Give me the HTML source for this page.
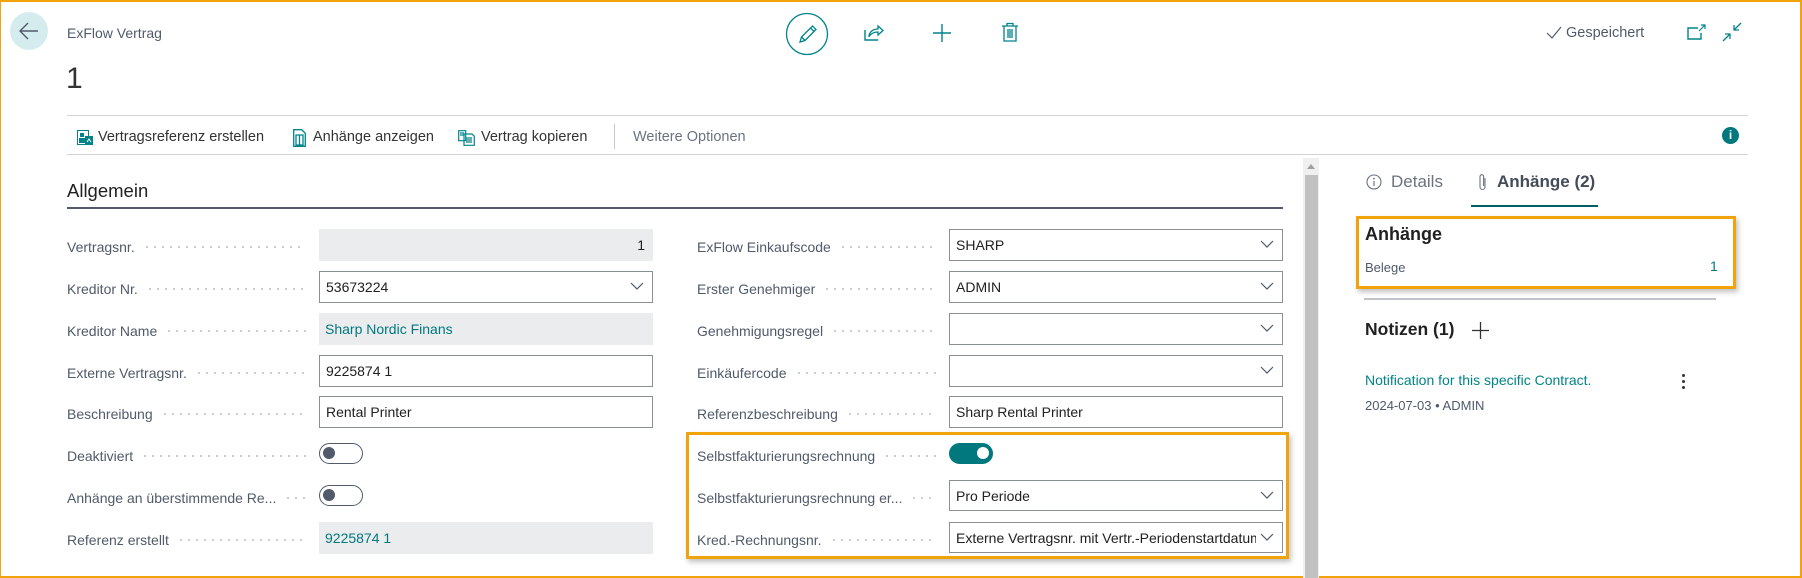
<!DOCTYPE html>
<html><head><meta charset="utf-8">
<style>
*{box-sizing:border-box;margin:0;padding:0}
html,body{width:1802px;height:578px;overflow:hidden;background:#fff}
body{position:relative;font-family:"Liberation Sans",sans-serif;color:#505a6a}
.a{position:absolute}
.frame{left:0;top:0;width:1802px;height:578px;border:2px solid #f0a30a;border-width:2px 2px 2px 1px}
.lbl{position:absolute;height:20px;font-size:14px;color:#505a6a;display:flex;align-items:center;white-space:nowrap}
.lbl .d{flex:1;height:2px;margin-left:8px;background-image:radial-gradient(circle,#b8bcc2 0.8px,transparent 1px);background-size:8px 2px;background-repeat:repeat-x}
.inp{position:absolute;height:32px;border:1px solid #8a8f96;font-size:14px;color:#212121;padding-left:6px;display:flex;align-items:center;white-space:nowrap;overflow:hidden}
.ro{border:none;background:#eaecee}
.chev{position:absolute;right:8px;top:9px}
.tog{position:absolute;width:44px;height:21px;border:1.5px solid #505a6a;border-radius:11px}
.tog:after{content:"";position:absolute;left:3px;top:3px;width:12px;height:12px;border-radius:50%;background:#505a6a}
.tog.on{background:#00787d;border-color:#00787d}
.tog.on:after{left:auto;right:3px;background:#fff}
.tb{position:absolute;top:129px;font-size:14.5px;color:#333;white-space:nowrap}
</style></head><body>
<div class="a frame"></div>

<!-- header -->
<div class="a" style="left:10px;top:12px;width:38px;height:38px;border-radius:50%;background:#d5ecef"></div>
<svg class="a" style="left:18px;top:21px" width="22" height="20" viewBox="0 0 22 20"><path d="M20 10H3M10 2L2 10l8 8" fill="none" stroke="#505a6a" stroke-width="1.4"/></svg>
<div class="a" style="left:67px;top:25px;font-size:14px;color:#505a6a">ExFlow Vertrag</div>
<div class="a" style="left:66px;top:62px;font-size:30px;font-weight:300;color:#333">1</div>

<svg class="a" style="left:785px;top:12px" width="44" height="44" viewBox="0 0 44 44"><circle cx="22" cy="22" r="20.5" fill="none" stroke="#00848a" stroke-width="1.3"/><path d="M15 30l1.5-5 11-11 3.5 3.5-11 11zM16.5 25l3.5 3.5M25.5 16l3.5 3.5" fill="none" stroke="#00848a" stroke-width="1.3"/></svg>
<svg class="a" style="left:864px;top:22px" width="20" height="20" viewBox="0 0 20 20"><path d="M1 8v10h13" fill="none" stroke="#00848a" stroke-width="1.4"/><path d="M5 15c0-5 4-8 9-8V4l5 4.5-5 4.5v-3c-4 0-7 1.5-9 4.5z" fill="none" stroke="#00848a" stroke-width="1.3"/></svg>
<svg class="a" style="left:932px;top:23px" width="20" height="20" viewBox="0 0 20 20"><path d="M10 1v18M1 10h18" stroke="#00848a" stroke-width="1.4"/></svg>
<svg class="a" style="left:1001px;top:22px" width="18" height="20" viewBox="0 0 18 20"><path d="M1 4h16M6 4V1.5h6V4M3 4v15h12V4M7 7v9M9 7v9M11 7v9" fill="none" stroke="#00848a" stroke-width="1.3"/></svg>

<svg class="a" style="left:1546px;top:26px" width="16" height="14" viewBox="0 0 16 14"><path d="M1 7l5 5L15 1" fill="none" stroke="#505a6a" stroke-width="1.2"/></svg>
<div class="a" style="left:1566px;top:25px;font-size:14.5px;color:#505a6a">Gespeichert</div>
<svg class="a" style="left:1687px;top:24px" width="20" height="16" viewBox="0 0 20 16"><path d="M11 4H1v11h13V9" fill="none" stroke="#00848a" stroke-width="1.4"/><path d="M12 7l6-6M14 1h4v4" fill="none" stroke="#00848a" stroke-width="1.2"/></svg>
<svg class="a" style="left:1722px;top:22px" width="20" height="20" viewBox="0 0 20 20"><path d="M19 1l-7 7M12 3v5h5M1 19l7-7M3 12h5v5" fill="none" stroke="#00848a" stroke-width="1.3"/></svg>

<!-- toolbar -->
<div class="a" style="left:67px;top:154px;width:1681px;height:1px;background:#d4d4d4"></div>
<div class="a" style="left:67px;top:115px;width:1681px;height:1px;background:#d4d4d4"></div>
<svg class="a" style="left:77px;top:130px" width="17" height="16" viewBox="0 0 17 16"><rect x="0.5" y="0.5" width="11" height="14" fill="none" stroke="#00848a"/><rect x="3" y="3" width="4" height="4" fill="#00848a"/><rect x="2" y="8" width="6" height="5" fill="#00848a"/><rect x="8" y="6" width="8" height="9" fill="#00848a"/><path d="M10 12l2-3 2 3" stroke="#fff" fill="none"/></svg>
<div class="tb" style="left:98px">Vertragsreferenz erstellen</div>
<svg class="a" style="left:293px;top:129px" width="13" height="18" viewBox="0 0 13 18"><path d="M0.7 0.7h8l3.6 3.6v13H0.7z M3 6h7v10H3z M6.5 6v10" fill="none" stroke="#00848a" stroke-width="1.3"/></svg>
<div class="tb" style="left:313px">Anhänge anzeigen</div>
<svg class="a" style="left:458px;top:130px" width="17" height="16" viewBox="0 0 17 16"><path d="M0.7 0.7h7v10h-7zM6 4h8l2.3 2.3V15.3H6zM8 8h6M8 10h6M8 12h6M2 3h4M2 5h4" fill="none" stroke="#00848a" stroke-width="1.2"/></svg>
<div class="tb" style="left:481px">Vertrag kopieren</div>
<div class="a" style="left:614px;top:124px;width:1px;height:25px;background:#c8c8c8"></div>
<div class="tb" style="left:633px;color:#6b7380">Weitere Optionen</div>
<div class="a" style="left:1722px;top:127px;width:17px;height:17px;border-radius:50%;background:#00787d;color:#fff;font-size:12px;font-weight:bold;text-align:center;line-height:17px">i</div>

<!-- section -->
<div class="a" style="left:67px;top:180px;font-size:18.5px;color:#212121">Allgemein</div>
<div class="a" style="left:67px;top:207px;width:1216px;height:2px;background:#505a6a"></div>

<!-- left column -->
<div class="lbl" style="left:67px;top:237px;width:239px">Vertragsnr.<span class="d"></span></div>
<div class="inp ro" style="left:319px;top:229px;width:334px;justify-content:flex-end;padding-right:8px">1</div>

<div class="lbl" style="left:67px;top:279px;width:239px">Kreditor Nr.<span class="d"></span></div>
<div class="inp" style="left:319px;top:271px;width:334px">53673224<svg class="chev" width="14" height="10" viewBox="0 0 14 10"><path d="M1 2l6 6 6-6" fill="none" stroke="#505a6a" stroke-width="1.2"/></svg></div>

<div class="lbl" style="left:67px;top:321px;width:239px">Kreditor Name<span class="d"></span></div>
<div class="inp ro" style="left:319px;top:313px;width:334px;color:#00787d">Sharp Nordic Finans</div>

<div class="lbl" style="left:67px;top:363px;width:239px">Externe Vertragsnr.<span class="d"></span></div>
<div class="inp" style="left:319px;top:355px;width:334px">9225874 1</div>

<div class="lbl" style="left:67px;top:404px;width:239px">Beschreibung<span class="d"></span></div>
<div class="inp" style="left:319px;top:396px;width:334px">Rental Printer</div>

<div class="lbl" style="left:67px;top:446px;width:239px">Deaktiviert<span class="d"></span></div>
<div class="tog" style="left:319px;top:443px"></div>

<div class="lbl" style="left:67px;top:488px;width:239px">Anhänge an überstimmende Re...<span class="d"></span></div>
<div class="tog" style="left:319px;top:485px"></div>

<div class="lbl" style="left:67px;top:530px;width:239px">Referenz erstellt<span class="d"></span></div>
<div class="inp ro" style="left:319px;top:522px;width:334px;color:#00787d">9225874 1</div>

<!-- right column -->
<div class="lbl" style="left:697px;top:237px;width:239px">ExFlow Einkaufscode<span class="d"></span></div>
<div class="inp" style="left:949px;top:229px;width:334px">SHARP<svg class="chev" width="14" height="10" viewBox="0 0 14 10"><path d="M1 2l6 6 6-6" fill="none" stroke="#505a6a" stroke-width="1.2"/></svg></div>

<div class="lbl" style="left:697px;top:279px;width:239px">Erster Genehmiger<span class="d"></span></div>
<div class="inp" style="left:949px;top:271px;width:334px">ADMIN<svg class="chev" width="14" height="10" viewBox="0 0 14 10"><path d="M1 2l6 6 6-6" fill="none" stroke="#505a6a" stroke-width="1.2"/></svg></div>

<div class="lbl" style="left:697px;top:321px;width:239px">Genehmigungsregel<span class="d"></span></div>
<div class="inp" style="left:949px;top:313px;width:334px"><svg class="chev" width="14" height="10" viewBox="0 0 14 10"><path d="M1 2l6 6 6-6" fill="none" stroke="#505a6a" stroke-width="1.2"/></svg></div>

<div class="lbl" style="left:697px;top:363px;width:239px">Einkäufercode<span class="d"></span></div>
<div class="inp" style="left:949px;top:355px;width:334px"><svg class="chev" width="14" height="10" viewBox="0 0 14 10"><path d="M1 2l6 6 6-6" fill="none" stroke="#505a6a" stroke-width="1.2"/></svg></div>

<div class="lbl" style="left:697px;top:404px;width:239px">Referenzbeschreibung<span class="d"></span></div>
<div class="inp" style="left:949px;top:396px;width:334px">Sharp Rental Printer</div>

<div class="lbl" style="left:697px;top:446px;width:239px">Selbstfakturierungsrechnung<span class="d"></span></div>
<div class="tog on" style="left:949px;top:443px"></div>

<div class="lbl" style="left:697px;top:488px;width:239px">Selbstfakturierungsrechnung er...<span class="d"></span></div>
<div class="inp" style="left:949px;top:480px;width:334px;height:31px">Pro Periode<svg class="chev" width="14" height="10" viewBox="0 0 14 10"><path d="M1 2l6 6 6-6" fill="none" stroke="#505a6a" stroke-width="1.2"/></svg></div>

<div class="lbl" style="left:697px;top:530px;width:239px">Kred.-Rechnungsnr.<span class="d"></span></div>
<div class="inp" style="left:949px;top:522px;width:334px;height:31px;padding-right:26px"><span style="overflow:hidden;display:block;width:300px">Externe Vertragsnr. mit Vertr.-Periodenstartdatum</span><svg class="chev" width="14" height="10" viewBox="0 0 14 10" style="background:#fff"><path d="M1 2l6 6 6-6" fill="none" stroke="#505a6a" stroke-width="1.2"/></svg></div>

<div class="a" style="left:686px;top:432px;width:603px;height:127px;border:3px solid #f0a30a;box-shadow:2px 3px 5px rgba(0,0,0,.25)"></div>

<!-- scrollbar -->
<div class="a" style="left:1303px;top:158px;width:16px;height:420px;background:#f0f0f0"></div>
<div class="a" style="left:1305px;top:175px;width:13px;height:403px;background:#c1c1c1"></div>
<div class="a" style="left:1307px;top:164px;width:0;height:0;border-left:4px solid transparent;border-right:4px solid transparent;border-bottom:5px solid #a0a0a0"></div>

<!-- right pane -->
<svg class="a" style="left:1366px;top:174px" width="16" height="16" viewBox="0 0 16 16"><circle cx="8" cy="8" r="7" fill="none" stroke="#6b7380" stroke-width="1.1"/><path d="M8 7v5" stroke="#6b7380" stroke-width="1.2"/><circle cx="8" cy="4.6" r="0.9" fill="#6b7380"/></svg>
<div class="a" style="left:1391px;top:172px;font-size:17px;color:#6b7380">Details</div>
<svg class="a" style="left:1478px;top:173px" width="10" height="18" viewBox="0 0 10 18"><path d="M7 5v9a2.5 2.5 0 0 1-5 0V3.5a1.8 1.8 0 0 1 3.6 0V13" fill="none" stroke="#6b7380" stroke-width="1.1"/></svg>
<div class="a" style="left:1497px;top:172px;font-size:17px;color:#444c58;font-weight:bold">Anhänge (2)</div>
<div class="a" style="left:1471px;top:205px;width:127px;height:2px;background:#005f64"></div>

<div class="a" style="left:1356px;top:216px;width:380px;height:73px;border:3px solid #f0a30a;box-shadow:2px 3px 5px rgba(0,0,0,.25)"></div>
<div class="a" style="left:1365px;top:224px;font-size:18px;font-weight:bold;color:#212121">Anhänge</div>
<div class="a" style="left:1365px;top:260px;font-size:13px;color:#505a6a">Belege</div>
<div class="a" style="left:1710px;top:258px;font-size:14px;color:#00787d">1</div>
<div class="a" style="left:1364px;top:298px;width:352px;height:2px;background:#c0c4c8"></div>

<div class="a" style="left:1365px;top:319px;font-size:17.5px;font-weight:bold;color:#212121">Notizen (1)</div>
<svg class="a" style="left:1471px;top:321px" width="19" height="19" viewBox="0 0 19 19"><path d="M9.5 1v17M1 9.5h17" stroke="#333" stroke-width="1.3"/></svg>
<div class="a" style="left:1365px;top:372px;font-size:14px;color:#00848a">Notification for this specific Contract.</div>
<div class="a" style="left:1682px;top:374px;width:3px;height:3px;border-radius:50%;background:#333;box-shadow:0 6px 0 #333,0 12px 0 #333"></div>
<div class="a" style="left:1365px;top:398px;font-size:13px;color:#505a6a">2024-07-03 • ADMIN</div>
</body></html>
